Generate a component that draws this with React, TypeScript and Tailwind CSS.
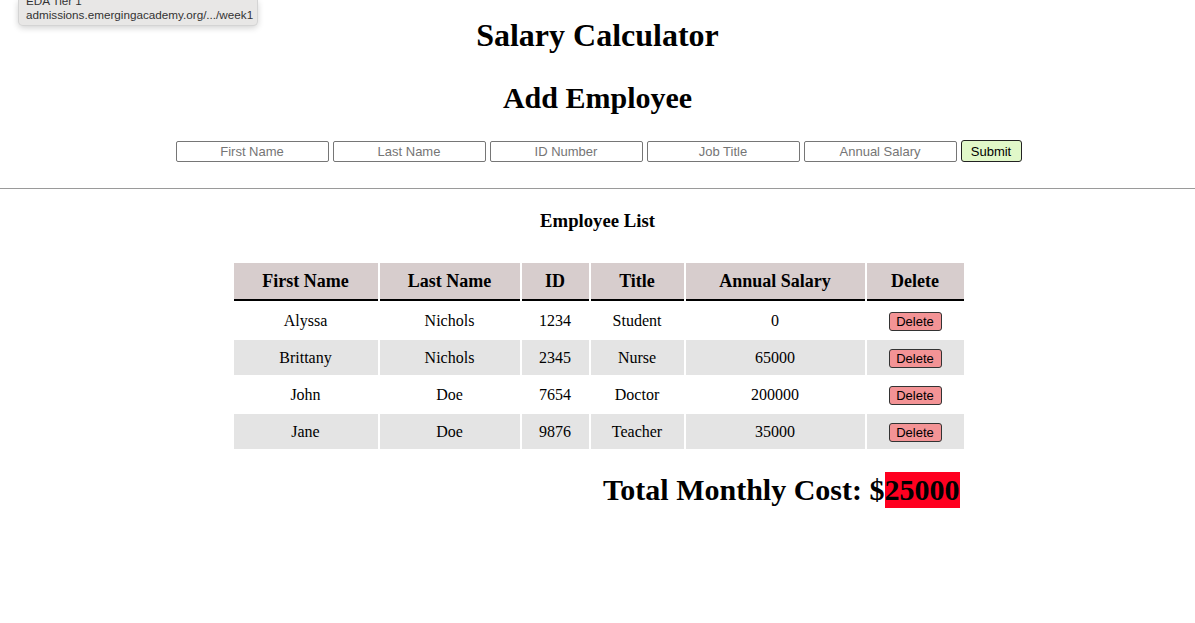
import React from "react";

const employees = [
  { first: "Alyssa", last: "Nichols", id: "1234", title: "Student", salary: "0" },
  { first: "Brittany", last: "Nichols", id: "2345", title: "Nurse", salary: "65000" },
  { first: "John", last: "Doe", id: "7654", title: "Doctor", salary: "200000" },
  { first: "Jane", last: "Doe", id: "9876", title: "Teacher", salary: "35000" },
];

const placeholders = ["First Name", "Last Name", "ID Number", "Job Title", "Annual Salary"];

export default function App() {
  return (
    <div className="relative w-full min-h-[623px] bg-white text-black font-['Liberation_Serif','Times_New_Roman',serif]">
      {/* URL tooltip */}
      <div className="absolute left-[18px] top-0 w-[240px] h-[26px] bg-[#e8e7e6] border border-[#d4d4d4] border-t-0 rounded-b-[5px] shadow-[0_2px_6px_rgba(0,0,0,0.18)] overflow-hidden font-['Liberation_Sans',Arial,sans-serif] text-[11.7px] leading-[14px] text-[#333] px-[7px]">
        <div className="-mt-[6px]">EDA Tier 1</div>
        <div>admissions.emergingacademy.org/.../week1</div>
      </div>

      <h1 className="pt-[17px] text-center text-[32px] font-bold leading-[37px]">Salary Calculator</h1>
      <h2 className="mt-[26px] text-center text-[30px] font-bold leading-[35px]">Add Employee</h2>

      <form className="mt-[25px] flex justify-center items-center gap-[4px] pl-[2px] font-['Liberation_Sans',Arial,sans-serif]">
        {placeholders.map((p) => (
          <input
            key={p}
            placeholder={p}
            className="w-[153px] h-[21px] border border-[#767676] rounded-[2px] text-center text-[13px] placeholder:text-[#757575] px-1 outline-none"
          />
        ))}
        <button
          type="button"
          className="w-[61px] h-[22px] bg-[#e1f8c9] border border-[#222] rounded-[3px] text-[13px] leading-[20px] pt-[1px] text-black"
        >
          Submit
        </button>
      </form>

      <hr className="mt-[26px] border-0 border-t border-[#9a9a9a]" />

      <h3 className="mt-[21px] text-center text-[18.72px] font-bold leading-[22px]">Employee List</h3>

      <div className="mt-[29px] flex justify-center pl-[2px]">
        <table className="border-separate border-spacing-[2px] text-[16px]">
          <thead>
            <tr>
              <th className="w-[144px] h-[38px] bg-[#d7cdcd] border-b-2 border-black text-[18px] font-bold">First Name</th>
              <th className="w-[140px] h-[38px] bg-[#d7cdcd] border-b-2 border-black text-[18px] font-bold">Last Name</th>
              <th className="w-[67px] h-[38px] bg-[#d7cdcd] border-b-2 border-black text-[18px] font-bold">ID</th>
              <th className="w-[93px] h-[38px] bg-[#d7cdcd] border-b-2 border-black text-[18px] font-bold">Title</th>
              <th className="w-[179px] h-[38px] bg-[#d7cdcd] border-b-2 border-black text-[18px] font-bold">Annual Salary</th>
              <th className="w-[97px] h-[38px] bg-[#d7cdcd] border-b-2 border-black text-[18px] font-bold">Delete</th>
            </tr>
          </thead>
          <tbody>
            {employees.map((e, i) => {
              const bg = i % 2 === 1 ? "bg-[#e4e4e4]" : "bg-white";
              return (
                <tr key={e.id} className={bg}>
                  <td className="h-[35px] text-center">{e.first}</td>
                  <td className="h-[35px] text-center">{e.last}</td>
                  <td className="h-[35px] text-center">{e.id}</td>
                  <td className="h-[35px] text-center">{e.title}</td>
                  <td className="h-[35px] text-center">{e.salary}</td>
                  <td className="h-[35px] text-center">
                    <button
                      type="button"
                      className="w-[53px] h-[19px] bg-[#f39395] border border-[#333] rounded-[3px] font-['Liberation_Sans',Arial,sans-serif] text-[13px] leading-[17px] text-black"
                    >
                      Delete
                    </button>
                  </td>
                </tr>
              );
            })}
          </tbody>
        </table>
      </div>

      <div className="mt-[21px] flex justify-center pl-[2px]">
        <div className="w-[734px] flex justify-end pr-[6px]">
          <h2 className="text-[30px] font-bold leading-[36px]">
            Total Monthly Cost: $<span className="bg-[#ff0020] inline-block h-[36px]">25000</span>
          </h2>
        </div>
      </div>
    </div>
  );
}
